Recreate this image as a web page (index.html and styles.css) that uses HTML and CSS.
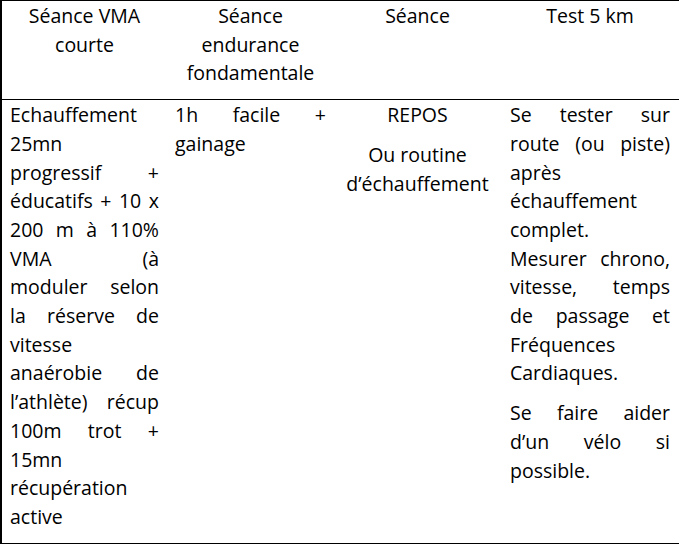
FILE: index.html
```html
<!DOCTYPE html>
<html lang="fr">
<head>
<meta charset="utf-8">
<title>Plan d'entraînement</title>
<link rel="stylesheet" href="styles.css">
</head>
<body>
<table class="plan">
  <colgroup>
    <col class="c1"><col class="c2"><col class="c3"><col class="c4">
  </colgroup>
  <thead>
    <tr>
      <th><p>Séance VMA<br>courte</p></th>
      <th><p>Séance<br>endurance<br>fondamentale</p></th>
      <th><p>Séance</p></th>
      <th class="last"><p>Test 5 km</p></th>
    </tr>
  </thead>
  <tbody>
    <tr>
      <td><p class="just">Echauffement<br>25mn<br>progressif +<br>éducatifs + 10 x<br>200 m à 110%<br>VMA (à<br>moduler selon<br>la réserve de<br>vitesse<br>anaérobie de<br>l’athlète) récup<br>100m trot +<br>15mn<br>récupération<br>active</p></td>
      <td><p class="just">1h facile +<br>gainage</p></td>
      <td class="center"><p>REPOS</p><p>Ou routine<br>d’échauffement</p></td>
      <td class="last"><p class="just">Se tester sur<br>route (ou piste)<br>après<br>échauffement<br>complet.<br>Mesurer chrono,<br>vitesse, temps<br>de passage et<br>Fréquences<br>Cardiaques.</p><p class="just">Se faire aider<br>d’un vélo si<br>possible.</p></td>
    </tr>
  </tbody>
</table>
</body>
</html>
```

FILE: styles.css
```css
html, body {
  margin: 0;
  padding: 0;
  background: #fff;
}

body {
  font-family: "Open Sans", "Liberation Sans", sans-serif;
  font-size: 19.5px;
  line-height: 28.7px;
  color: #000;
}

.plan {
  table-layout: fixed;
  width: 679px;
  border-collapse: separate;
  border-spacing: 0;
  border-top: 1px solid #000;
  border-left: 2px solid #000;
  border-bottom: 1px solid #000;
}

.c1 { width: 165px; }
.c2 { width: 167px; }
.c3 { width: 167px; }
.c4 { width: 178px; }

.plan th,
.plan td {
  padding: 1px 8px 0 8px;
  vertical-align: top;
}

.plan th {
  font-weight: normal;
  text-align: center;
  border-bottom: 1px solid #000;
}

.plan th.last,
.plan td.last {
  padding: 1px 9px 0 9px;
}

.plan p {
  margin: 0 0 11px 0;
}

.just {
  text-align: justify;
  text-align-last: justify;
  white-space: nowrap;
}

.center {
  text-align: center;
}
```
